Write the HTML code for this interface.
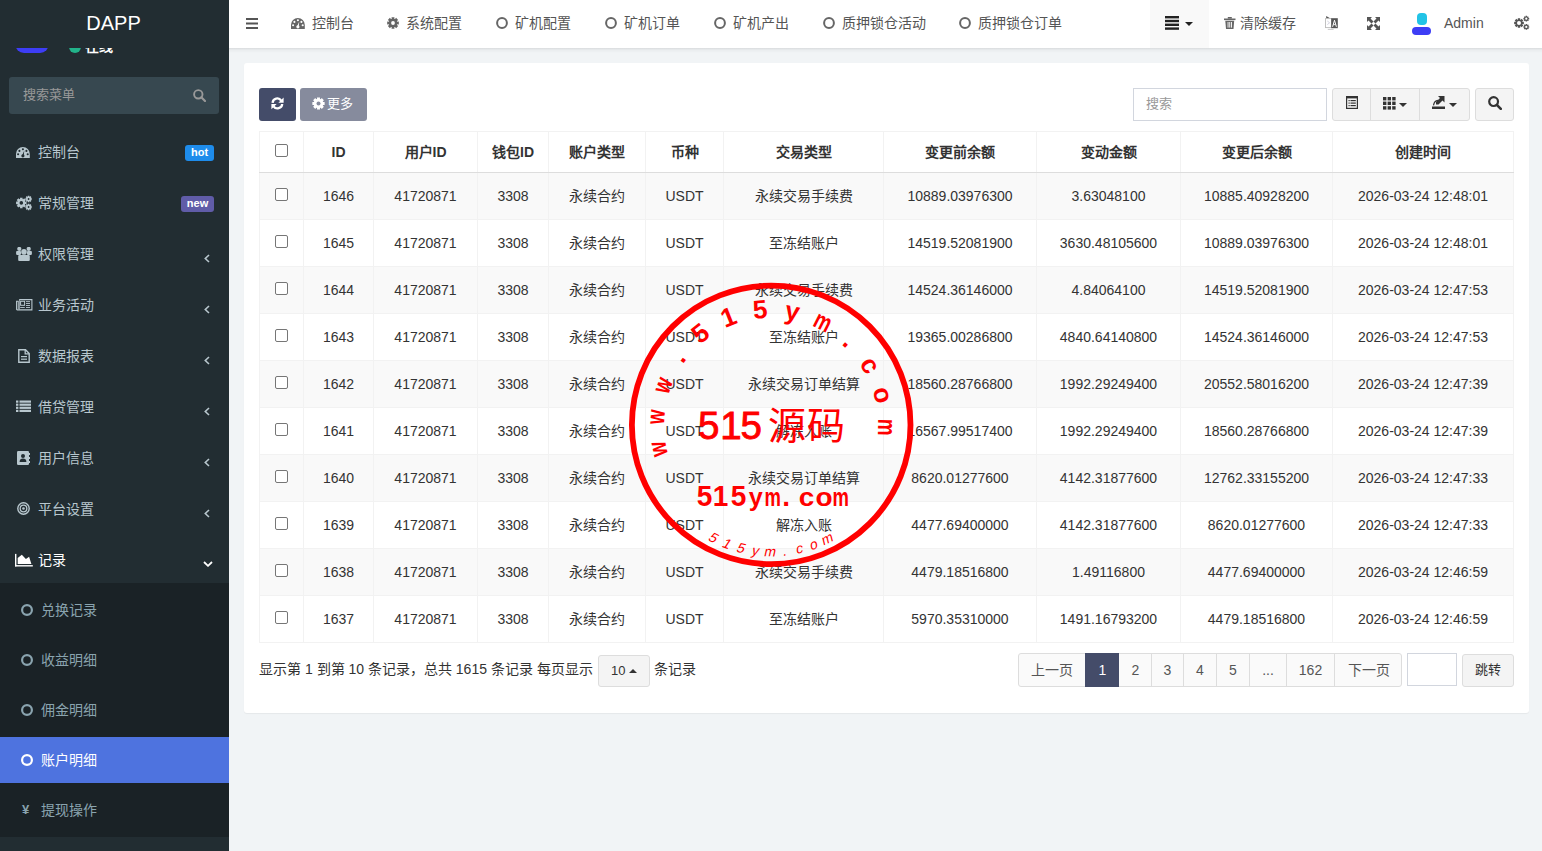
<!DOCTYPE html>
<html lang="zh-CN"><head><meta charset="utf-8">
<style>
*{box-sizing:border-box;margin:0;padding:0}
html,body{width:1542px;height:851px;overflow:hidden}
body{font-family:"Liberation Sans",sans-serif;font-size:14px;color:#333;background:#f1f4f6;position:relative}
.abs{position:absolute}
.t{position:absolute;white-space:nowrap;line-height:20px;height:20px}
.c{transform:translateX(-50%)}
.side{color:#b8c7ce}
.sub{color:#8aa4af}
.nav{color:#555}
.th{font-weight:bold;color:#333}
.bd{position:absolute;background:#f2f2f2}
</style></head><body>

<div class="abs" style="left:0;top:0;width:229px;height:851px;background:#222d32;overflow:hidden">
<div class="abs" style="left:15px;top:30px;width:34px;height:23px;border-radius:0 0 9px 9px;background:#3d3df5"></div>
<div class="abs" style="left:69px;top:41px;width:12px;height:12px;border-radius:50%;background:#22b38a"></div>
<div class="t" style="left:85px;top:36px;color:#fff;font-size:14px;font-weight:bold">在线</div>
<div class="abs" style="left:0;top:0;width:229px;height:48px;background:#222d32"></div>
<div class="t" style="left:-1px;width:229px;top:11px;height:24px;line-height:24px;text-align:center;color:#fff;font-size:20px">DAPP</div>
<div class="abs" style="left:9px;top:77px;width:210px;height:37px;border-radius:3px;background:#374850"></div>
<div class="t " style="left:23px;top:85px;color:#999;font-size:13px">搜索菜单</div>
<svg class="abs" style="left:193px;top:89px;" width="13" height="13" viewBox="0 0 13 13"><circle cx="5.3" cy="5.3" r="4.2" fill="none" stroke="#999" stroke-width="1.9"/><path d="M8.3 8.3 L12 12" stroke="#999" stroke-width="2.2" stroke-linecap="round"/></svg>
<div class="t " style="left:38px;top:142px;color:#b8c7ce;">控制台</div>
<div class="abs" style="left:185px;top:145px;width:29px;height:16px;border-radius:3px;background:#1e8ceb;color:#fff;font-size:11px;font-weight:bold;line-height:14px;text-align:center">hot</div>
<div class="t " style="left:38px;top:193px;color:#b8c7ce;">常规管理</div>
<div class="abs" style="left:181px;top:196px;width:33px;height:16px;border-radius:3px;background:#605ca8;color:#fff;font-size:11px;font-weight:bold;line-height:14px;text-align:center">new</div>
<div class="t " style="left:38px;top:244px;color:#b8c7ce;">权限管理</div>
<svg class="abs" style="left:204px;top:254px;" width="6" height="9" viewBox="0 0 6 9"><path d="M5 1 L1.3 4.5 L5 8" fill="none" stroke="#b8c7ce" stroke-width="1.6"/></svg>
<div class="t " style="left:38px;top:295px;color:#b8c7ce;">业务活动</div>
<svg class="abs" style="left:204px;top:305px;" width="6" height="9" viewBox="0 0 6 9"><path d="M5 1 L1.3 4.5 L5 8" fill="none" stroke="#b8c7ce" stroke-width="1.6"/></svg>
<div class="t " style="left:38px;top:346px;color:#b8c7ce;">数据报表</div>
<svg class="abs" style="left:204px;top:356px;" width="6" height="9" viewBox="0 0 6 9"><path d="M5 1 L1.3 4.5 L5 8" fill="none" stroke="#b8c7ce" stroke-width="1.6"/></svg>
<div class="t " style="left:38px;top:397px;color:#b8c7ce;">借贷管理</div>
<svg class="abs" style="left:204px;top:407px;" width="6" height="9" viewBox="0 0 6 9"><path d="M5 1 L1.3 4.5 L5 8" fill="none" stroke="#b8c7ce" stroke-width="1.6"/></svg>
<div class="t " style="left:38px;top:448px;color:#b8c7ce;">用户信息</div>
<svg class="abs" style="left:204px;top:458px;" width="6" height="9" viewBox="0 0 6 9"><path d="M5 1 L1.3 4.5 L5 8" fill="none" stroke="#b8c7ce" stroke-width="1.6"/></svg>
<div class="t " style="left:38px;top:499px;color:#b8c7ce;">平台设置</div>
<svg class="abs" style="left:204px;top:509px;" width="6" height="9" viewBox="0 0 6 9"><path d="M5 1 L1.3 4.5 L5 8" fill="none" stroke="#b8c7ce" stroke-width="1.6"/></svg>
<div class="t " style="left:38px;top:550px;color:#fff;">记录</div>
<svg class="abs" style="left:203px;top:561px;" width="10" height="6" viewBox="0 0 10 6"><path d="M1 1 L5 4.8 L9 1" fill="none" stroke="#fff" stroke-width="1.8"/></svg>
<svg class="abs" style="left:16px;top:147px;" width="15" height="11" viewBox="0 0 15 11"><path d="M0 11 L0 7 A6.9 6.9 0 0 1 13.8 7 L13.8 11 Z" fill="#b8c7ce"/><circle cx="6.9" cy="2.2" r="1.05" fill="#222d32"/><circle cx="3.4" cy="3.9" r="1.05" fill="#222d32"/><circle cx="10.4" cy="3.9" r="1.05" fill="#222d32"/><circle cx="2.1" cy="7.2" r="1.05" fill="#222d32"/><circle cx="11.7" cy="7.2" r="1.05" fill="#222d32"/><path d="M6.1 8.6 L8.3 3.6 L7.7 8.9 Z" fill="#222d32"/><circle cx="6.9" cy="8.8" r="1.6" fill="#222d32"/></svg>
<svg class="abs" style="left:15px;top:194px;" width="18" height="17" viewBox="0 0 18 17"><path d="M5.13 5.29 L4.99 3.66 L7.61 3.66 L7.47 5.29 L8.03 5.51 L9.08 4.27 L10.93 6.12 L9.69 7.17 L9.91 7.73 L11.54 7.59 L11.54 10.21 L9.91 10.07 L9.69 10.63 L10.93 11.68 L9.08 13.53 L8.03 12.29 L7.47 12.51 L7.61 14.14 L4.99 14.14 L5.13 12.51 L4.57 12.29 L3.52 13.53 L1.67 11.68 L2.91 10.63 L2.69 10.07 L1.06 10.21 L1.06 7.59 L2.69 7.73 L2.91 7.17 L1.67 6.12 L3.52 4.27 L4.57 5.51Z" fill="#b8c7ce"/><circle cx="6.3" cy="8.9" r="3.9" fill="#b8c7ce"/><circle cx="6.3" cy="8.9" r="1.8" fill="#222d32"/><path d="M12.89 2.81 L12.78 1.70 L14.42 1.70 L14.31 2.81 L14.64 2.95 L15.35 2.08 L16.52 3.25 L15.65 3.96 L15.79 4.29 L16.90 4.18 L16.90 5.82 L15.79 5.71 L15.65 6.04 L16.52 6.75 L15.35 7.92 L14.64 7.05 L14.31 7.19 L14.42 8.30 L12.78 8.30 L12.89 7.19 L12.56 7.05 L11.85 7.92 L10.68 6.75 L11.55 6.04 L11.41 5.71 L10.30 5.82 L10.30 4.18 L11.41 4.29 L11.55 3.96 L10.68 3.25 L11.85 2.08 L12.56 2.95Z" fill="#b8c7ce"/><circle cx="13.6" cy="5" r="2.4" fill="#b8c7ce"/><circle cx="13.6" cy="5" r="0.9" fill="#222d32"/><path d="M12.89 10.81 L12.78 9.70 L14.42 9.70 L14.31 10.81 L14.64 10.95 L15.35 10.08 L16.52 11.25 L15.65 11.96 L15.79 12.29 L16.90 12.18 L16.90 13.82 L15.79 13.71 L15.65 14.04 L16.52 14.75 L15.35 15.92 L14.64 15.05 L14.31 15.19 L14.42 16.30 L12.78 16.30 L12.89 15.19 L12.56 15.05 L11.85 15.92 L10.68 14.75 L11.55 14.04 L11.41 13.71 L10.30 13.82 L10.30 12.18 L11.41 12.29 L11.55 11.96 L10.68 11.25 L11.85 10.08 L12.56 10.95Z" fill="#b8c7ce"/><circle cx="13.6" cy="13" r="2.4" fill="#b8c7ce"/><circle cx="13.6" cy="13" r="0.9" fill="#222d32"/></svg>
<svg class="abs" style="left:16px;top:247px;" width="16" height="15" viewBox="0 0 16 15"><circle cx="3.3" cy="1.9" r="2.1" fill="#b8c7ce"/><circle cx="12.7" cy="1.9" r="2.1" fill="#b8c7ce"/><rect x="0.1" y="4.1" width="4.9" height="3.8" rx="0.8" fill="#b8c7ce"/><rect x="11" y="4.1" width="4.9" height="3.8" rx="0.8" fill="#b8c7ce"/><circle cx="8" cy="4.9" r="2.8" fill="#b8c7ce"/><rect x="2.2" y="7.9" width="11.6" height="6.2" rx="1.1" fill="#b8c7ce"/></svg>
<svg class="abs" style="left:16px;top:299px;" width="17" height="12" viewBox="0 0 17 12"><path d="M3.2 0.6 L15.9 0.6 L15.9 10.9 L1.3 10.9 Q0.6 10.9 0.6 10.2 L0.6 2.2 L2.2 2.2" fill="none" stroke="#b8c7ce" stroke-width="1.1"/><rect x="1.8" y="2" width="0.9" height="8" fill="#b8c7ce"/><rect x="2.9" y="0.6" width="0.8" height="10" fill="#b8c7ce"/><rect x="4.6" y="2.3" width="4" height="4" fill="none" stroke="#b8c7ce" stroke-width="1"/><rect x="10" y="2.2" width="4" height="0.9" fill="#b8c7ce"/><rect x="10" y="4.1" width="4" height="0.9" fill="#b8c7ce"/><rect x="10" y="6.1" width="4" height="0.9" fill="#b8c7ce"/><rect x="10" y="8.1" width="4" height="0.9" fill="#b8c7ce"/><rect x="4.2" y="8.1" width="4.6" height="0.9" fill="#b8c7ce"/></svg>
<svg class="abs" style="left:18px;top:349px;" width="12" height="14" viewBox="0 0 12 14"><path d="M0.8 0.8 L7.5 0.8 L11.2 4.5 L11.2 13.2 L0.8 13.2 Z" fill="none" stroke="#b8c7ce" stroke-width="1.4"/><path d="M7.2 1 L7.2 4.8 L11 4.8" fill="none" stroke="#b8c7ce" stroke-width="1.3"/><rect x="3" y="7" width="6" height="1.2" fill="#b8c7ce"/><rect x="3" y="9.6" width="6" height="1.2" fill="#b8c7ce"/></svg>
<svg class="abs" style="left:16px;top:400px;" width="15" height="12" viewBox="0 0 15 12"><rect x="0" y="0.5" width="2.4" height="2.2" fill="#b8c7ce"/><rect x="3.5" y="0.5" width="11.5" height="2.2" fill="#b8c7ce"/><rect x="0" y="3.6" width="2.4" height="2.2" fill="#b8c7ce"/><rect x="3.5" y="3.6" width="11.5" height="2.2" fill="#b8c7ce"/><rect x="0" y="6.7" width="2.4" height="2.2" fill="#b8c7ce"/><rect x="3.5" y="6.7" width="11.5" height="2.2" fill="#b8c7ce"/><rect x="0" y="9.8" width="2.4" height="2.2" fill="#b8c7ce"/><rect x="3.5" y="9.8" width="11.5" height="2.2" fill="#b8c7ce"/></svg>
<svg class="abs" style="left:17px;top:451px;" width="13" height="14" viewBox="0 0 13 14"><rect x="0" y="0" width="12" height="14" rx="1.2" fill="#b8c7ce"/><circle cx="6" cy="5" r="2" fill="#222d32"/><path d="M2.6 11 C2.6 8.5 4 7.6 6 7.6 C8 7.6 9.4 8.5 9.4 11 Z" fill="#222d32"/><rect x="12" y="2" width="1.2" height="2" fill="#b8c7ce"/><rect x="12" y="6" width="1.2" height="2" fill="#b8c7ce"/><rect x="12" y="10" width="1.2" height="2" fill="#b8c7ce"/></svg>
<svg class="abs" style="left:17px;top:502px;" width="13" height="13" viewBox="0 0 13 13"><circle cx="6.5" cy="6.5" r="5.7" fill="none" stroke="#b8c7ce" stroke-width="1.4"/><circle cx="6.5" cy="6.5" r="3.3" fill="none" stroke="#b8c7ce" stroke-width="1.3"/><circle cx="6.5" cy="6.5" r="1.3" fill="#b8c7ce"/></svg>
<svg class="abs" style="left:15px;top:553px;" width="18" height="14" viewBox="0 0 18 14"><rect x="0" y="0.9" width="1.4" height="12.5" fill="#fff"/><rect x="0" y="12.1" width="17.8" height="1.4" fill="#fff"/><path d="M2.7 11 L2.7 5 L6.8 1.8 L10.9 5.9 L14.1 3.8 L16.4 11 Z" fill="#fff"/></svg>
</div>
<div class="abs" style="left:0;top:583px;width:229px;height:254px;background:#1a2226"></div>
<div class="abs" style="left:0;top:737px;width:229px;height:46px;background:#4e73df"></div>
<div class="t " style="left:41px;top:600px;color:#8aa4af">兑换记录</div>
<svg class="abs" style="left:21px;top:604px;" width="12" height="12" viewBox="0 0 12 12"><circle cx="6" cy="6" r="4.9" fill="none" stroke="#8aa4af" stroke-width="2.2"/></svg>
<div class="t " style="left:41px;top:650px;color:#8aa4af">收益明细</div>
<svg class="abs" style="left:21px;top:654px;" width="12" height="12" viewBox="0 0 12 12"><circle cx="6" cy="6" r="4.9" fill="none" stroke="#8aa4af" stroke-width="2.2"/></svg>
<div class="t " style="left:41px;top:700px;color:#8aa4af">佣金明细</div>
<svg class="abs" style="left:21px;top:704px;" width="12" height="12" viewBox="0 0 12 12"><circle cx="6" cy="6" r="4.9" fill="none" stroke="#8aa4af" stroke-width="2.2"/></svg>
<div class="t " style="left:41px;top:750px;color:#fff">账户明细</div>
<svg class="abs" style="left:21px;top:754px;" width="12" height="12" viewBox="0 0 12 12"><circle cx="6" cy="6" r="4.9" fill="none" stroke="#fff" stroke-width="2.2"/></svg>
<div class="t " style="left:41px;top:800px;color:#8aa4af">提现操作</div>
<div class="t " style="left:22px;top:800px;color:#8aa4af;font-size:13px;font-weight:bold">¥</div>
<div class="abs" style="left:229px;top:0;width:1313px;height:48px;background:#fff"></div>
<div class="abs" style="left:229px;top:48px;width:1313px;height:5px;background:linear-gradient(rgba(0,0,0,.10),rgba(0,0,0,.03) 40%,rgba(0,0,0,0))"></div>
<svg class="abs" style="left:246px;top:18px;" width="12" height="11" viewBox="0 0 12 11"><rect x="0" y="0" width="12" height="2" fill="#555"/><rect x="0" y="4.5" width="12" height="2" fill="#555"/><rect x="0" y="9" width="12" height="2" fill="#555"/></svg>
<svg class="abs" style="left:291px;top:18px;" width="14" height="11" viewBox="0 0 14 11"><path d="M0 11 L0 7 A6.9 6.9 0 0 1 13.8 7 L13.8 11 Z" fill="#666"/><circle cx="6.9" cy="2.2" r="1.05" fill="#fff"/><circle cx="3.4" cy="3.9" r="1.05" fill="#fff"/><circle cx="10.4" cy="3.9" r="1.05" fill="#fff"/><circle cx="2.1" cy="7.2" r="1.05" fill="#fff"/><circle cx="11.7" cy="7.2" r="1.05" fill="#fff"/><path d="M6.1 8.6 L8.3 3.6 L7.7 8.9 Z" fill="#fff"/><circle cx="6.9" cy="8.8" r="1.6" fill="#fff"/></svg>
<div class="t nav" style="left:312px;top:13px;">控制台</div>
<svg class="abs" style="left:387px;top:17px;" width="12" height="12" viewBox="0 0 12 12"><path d="M4.73 2.10 L4.54 0.18 L7.46 0.18 L7.27 2.10 L7.86 2.35 L9.09 0.85 L11.15 2.91 L9.65 4.14 L9.90 4.73 L11.82 4.54 L11.82 7.46 L9.90 7.27 L9.65 7.86 L11.15 9.09 L9.09 11.15 L7.86 9.65 L7.27 9.90 L7.46 11.82 L4.54 11.82 L4.73 9.90 L4.14 9.65 L2.91 11.15 L0.85 9.09 L2.35 7.86 L2.10 7.27 L0.18 7.46 L0.18 4.54 L2.10 4.73 L2.35 4.14 L0.85 2.91 L2.91 0.85 L4.14 2.35Z" fill="#666"/><circle cx="6" cy="6" r="4.199999999999999" fill="#666"/><circle cx="6" cy="6" r="1.9" fill="#fff"/></svg>
<div class="t nav" style="left:406px;top:13px;">系统配置</div>
<svg class="abs" style="left:496px;top:17px;" width="12" height="12" viewBox="0 0 12 12"><circle cx="6" cy="6" r="4.9" fill="none" stroke="#666" stroke-width="2"/></svg>
<div class="t nav" style="left:515px;top:13px;">矿机配置</div>
<svg class="abs" style="left:605px;top:17px;" width="12" height="12" viewBox="0 0 12 12"><circle cx="6" cy="6" r="4.9" fill="none" stroke="#666" stroke-width="2"/></svg>
<div class="t nav" style="left:624px;top:13px;">矿机订单</div>
<svg class="abs" style="left:714px;top:17px;" width="12" height="12" viewBox="0 0 12 12"><circle cx="6" cy="6" r="4.9" fill="none" stroke="#666" stroke-width="2"/></svg>
<div class="t nav" style="left:733px;top:13px;">矿机产出</div>
<svg class="abs" style="left:823px;top:17px;" width="12" height="12" viewBox="0 0 12 12"><circle cx="6" cy="6" r="4.9" fill="none" stroke="#666" stroke-width="2"/></svg>
<div class="t nav" style="left:842px;top:13px;">质押锁仓活动</div>
<svg class="abs" style="left:959px;top:17px;" width="12" height="12" viewBox="0 0 12 12"><circle cx="6" cy="6" r="4.9" fill="none" stroke="#666" stroke-width="2"/></svg>
<div class="t nav" style="left:978px;top:13px;">质押锁仓订单</div>
<div class="abs" style="left:1150px;top:0;width:59px;height:48px;background:#f9f9f9"></div>
<svg class="abs" style="left:1165px;top:16px;" width="15" height="14" viewBox="0 0 15 14"><rect x="0" y="0" width="14" height="2.4" fill="#222"/><rect x="0" y="3.8" width="14" height="2.4" fill="#222"/><rect x="0" y="7.6" width="14" height="2.4" fill="#222"/><rect x="0" y="11.4" width="14" height="2.4" fill="#222"/></svg>
<svg class="abs" style="left:1185px;top:22px;" width="8" height="4" viewBox="0 0 8 4"><path d="M0 0 L8 0 L4 4 Z" fill="#222"/></svg>
<svg class="abs" style="left:1224px;top:17px;" width="12" height="12" viewBox="0 0 12 12"><rect x="0" y="1.5" width="11.5" height="1.6" fill="#666"/><rect x="3.8" y="0" width="4" height="1.6" fill="#666"/><path d="M1.3 3.8 L10.2 3.8 L9.5 12 L2 12 Z" fill="#666"/><rect x="3.6" y="5" width="0.9" height="5.6" fill="#fff"/><rect x="5.3" y="5" width="0.9" height="5.6" fill="#fff"/><rect x="7" y="5" width="0.9" height="5.6" fill="#fff"/></svg>
<div class="t nav" style="left:1240px;top:13px;">清除缓存</div>
<svg class="abs" style="left:1325px;top:16px;" width="13" height="14" viewBox="0 0 13 14"><path d="M1.2 0 L1.2 2.6 L5.5 2.6 Z" fill="#555"/><rect x="0.5" y="2.6" width="6.2" height="9" fill="#fff" stroke="#bbb" stroke-width="0.9"/><path d="M2.3 5 L4.6 6.8 L2.3 8.6" fill="none" stroke="#c8c8d8" stroke-width="0.8"/><rect x="6.2" y="2.2" width="6.6" height="10" fill="#555"/><path d="M7.6 10.8 L9.5 4.2 L11.4 10.8" fill="none" stroke="#fff" stroke-width="1"/><path d="M8.3 8.6 L10.7 8.6" stroke="#fff" stroke-width="0.8"/><path d="M2.8 13.4 L8.6 13.4" stroke="#bbb" stroke-width="0.8"/></svg>
<svg class="abs" style="left:1367px;top:17px;" width="13" height="13" viewBox="0 0 13 13"><path d="M0 0 L5 0 L3.5 1.5 L6.5 4.5 L4.5 6.5 L1.5 3.5 L0 5 Z" fill="#555"/><path d="M13 0 L8 0 L9.5 1.5 L6.5 4.5 L8.5 6.5 L11.5 3.5 L13 5 Z" fill="#555"/><path d="M0 13 L5 13 L3.5 11.5 L6.5 8.5 L4.5 6.5 L1.5 9.5 L0 8 Z" fill="#555"/><path d="M13 13 L8 13 L9.5 11.5 L6.5 8.5 L8.5 6.5 L11.5 9.5 L13 8 Z" fill="#555"/></svg>
<div class="abs" style="left:1417px;top:13px;width:10px;height:12px;border-radius:4px;background:#22c3e6"></div>
<div class="abs" style="left:1412px;top:27px;width:19px;height:8px;border-radius:4px;background:#3d3df5"></div>
<div class="t nav" style="left:1444px;top:13px;">Admin</div>
<svg class="abs" style="left:1513px;top:14px;" width="17" height="17" viewBox="0 0 17 17"><path d="M4.92 5.67 L4.79 4.15 L7.21 4.15 L7.08 5.67 L7.59 5.88 L8.57 4.71 L10.29 6.43 L9.12 7.41 L9.33 7.92 L10.85 7.79 L10.85 10.21 L9.33 10.08 L9.12 10.59 L10.29 11.57 L8.57 13.29 L7.59 12.12 L7.08 12.33 L7.21 13.85 L4.79 13.85 L4.92 12.33 L4.41 12.12 L3.43 13.29 L1.71 11.57 L2.88 10.59 L2.67 10.08 L1.15 10.21 L1.15 7.79 L2.67 7.92 L2.88 7.41 L1.71 6.43 L3.43 4.71 L4.41 5.88Z" fill="#555"/><circle cx="6" cy="9" r="3.6" fill="#555"/><circle cx="6" cy="9" r="2.0" fill="#fff"/><path d="M12.68 2.80 L12.57 1.79 L14.03 1.79 L13.92 2.80 L14.21 2.92 L14.84 2.13 L15.87 3.16 L15.08 3.79 L15.20 4.08 L16.21 3.97 L16.21 5.43 L15.20 5.32 L15.08 5.61 L15.87 6.24 L14.84 7.27 L14.21 6.48 L13.92 6.60 L14.03 7.61 L12.57 7.61 L12.68 6.60 L12.39 6.48 L11.76 7.27 L10.73 6.24 L11.52 5.61 L11.40 5.32 L10.39 5.43 L10.39 3.97 L11.40 4.08 L11.52 3.79 L10.73 3.16 L11.76 2.13 L12.39 2.92Z" fill="#555"/><circle cx="13.3" cy="4.7" r="2.1" fill="#555"/><circle cx="13.3" cy="4.7" r="1.1" fill="#fff"/><path d="M12.68 11.00 L12.57 9.99 L14.03 9.99 L13.92 11.00 L14.21 11.12 L14.84 10.33 L15.87 11.36 L15.08 11.99 L15.20 12.28 L16.21 12.17 L16.21 13.63 L15.20 13.52 L15.08 13.81 L15.87 14.44 L14.84 15.47 L14.21 14.68 L13.92 14.80 L14.03 15.81 L12.57 15.81 L12.68 14.80 L12.39 14.68 L11.76 15.47 L10.73 14.44 L11.52 13.81 L11.40 13.52 L10.39 13.63 L10.39 12.17 L11.40 12.28 L11.52 11.99 L10.73 11.36 L11.76 10.33 L12.39 11.12Z" fill="#555"/><circle cx="13.3" cy="12.9" r="2.1" fill="#555"/><circle cx="13.3" cy="12.9" r="1.1" fill="#fff"/></svg>
<div class="abs" style="left:244px;top:63px;width:1285px;height:650px;background:#fff;border-radius:3px;box-shadow:0 1px 1px rgba(0,0,0,.05)"></div>
<div class="abs" style="left:259px;top:88px;width:37px;height:33px;border-radius:3px;background:#444c69"></div>
<svg class="abs" style="left:271px;top:97px;" width="13" height="13" viewBox="0 0 13 13"><path d="M1.6 5.8 A4.7 4.7 0 0 1 10.2 3.6" fill="none" stroke="#fff" stroke-width="2.3"/><path d="M12.6 0.6 L12.6 5.8 L7.4 5.8 Z" fill="#fff"/><path d="M11.2 7 A4.7 4.7 0 0 1 2.6 9.3" fill="none" stroke="#fff" stroke-width="2.3"/><path d="M0.4 12.3 L0.4 7 L5.6 7 Z" fill="#fff"/></svg>
<div class="abs" style="left:300px;top:88px;width:67px;height:33px;border-radius:3px;background:#868b9d"></div>
<svg class="abs" style="left:312px;top:97px;" width="13" height="13" viewBox="0 0 13 13"><path d="M5.08 2.13 L4.97 0.39 L8.03 0.39 L7.92 2.13 L8.59 2.40 L9.74 1.10 L11.90 3.26 L10.60 4.41 L10.87 5.08 L12.61 4.97 L12.61 8.03 L10.87 7.92 L10.60 8.59 L11.90 9.74 L9.74 11.90 L8.59 10.60 L7.92 10.87 L8.03 12.61 L4.97 12.61 L5.08 10.87 L4.41 10.60 L3.26 11.90 L1.10 9.74 L2.40 8.59 L2.13 7.92 L0.39 8.03 L0.39 4.97 L2.13 5.08 L2.40 4.41 L1.10 3.26 L3.26 1.10 L4.41 2.40Z" fill="#fff"/><circle cx="6.5" cy="6.5" r="4.699999999999999" fill="#fff"/><circle cx="6.5" cy="6.5" r="2.0" fill="#868b9d"/></svg>
<div class="t " style="left:327px;top:94px;color:#fff;font-size:13px">更多</div>
<div class="abs" style="left:1133px;top:88px;width:194px;height:33px;border:1px solid #d2d6de;background:#fff"></div>
<div class="t " style="left:1146px;top:94px;color:#999;font-size:13px">搜索</div>
<div class="abs" style="left:1332px;top:88px;width:138px;height:33px;border:1px solid #ddd;border-radius:3px;background:#f4f4f4"></div>
<div class="abs" style="left:1370px;top:89px;width:1px;height:31px;background:#ddd"></div>
<div class="abs" style="left:1419px;top:89px;width:1px;height:31px;background:#ddd"></div>
<div class="abs" style="left:1475px;top:88px;width:39px;height:33px;border:1px solid #ddd;border-radius:3px;background:#f4f4f4"></div>
<svg class="abs" style="left:1346px;top:96px;" width="12" height="13" viewBox="0 0 12 13"><rect x="0.6" y="0.6" width="10.8" height="11.8" fill="none" stroke="#333" stroke-width="1.2"/><rect x="0.6" y="0.6" width="10.8" height="1.8" fill="#333"/><rect x="2.5" y="4" width="1.2" height="1.2" fill="#333"/><rect x="4.5" y="4" width="5.3" height="1.2" fill="#333"/><rect x="2.5" y="6.5" width="1.2" height="1.2" fill="#333"/><rect x="4.5" y="6.5" width="5.3" height="1.2" fill="#333"/><rect x="2.5" y="9" width="1.2" height="1.2" fill="#333"/><rect x="4.5" y="9" width="5.3" height="1.2" fill="#333"/></svg>
<svg class="abs" style="left:1383px;top:97px;" width="13" height="13" viewBox="0 0 13 13"><rect x="0" y="0" width="3.4" height="3.4" fill="#333"/><rect x="0" y="4.6" width="3.4" height="3.4" fill="#333"/><rect x="0" y="9.2" width="3.4" height="3.4" fill="#333"/><rect x="4.6" y="0" width="3.4" height="3.4" fill="#333"/><rect x="4.6" y="4.6" width="3.4" height="3.4" fill="#333"/><rect x="4.6" y="9.2" width="3.4" height="3.4" fill="#333"/><rect x="9.2" y="0" width="3.4" height="3.4" fill="#333"/><rect x="9.2" y="4.6" width="3.4" height="3.4" fill="#333"/><rect x="9.2" y="9.2" width="3.4" height="3.4" fill="#333"/></svg>
<svg class="abs" style="left:1399px;top:103px;" width="8" height="4" viewBox="0 0 8 4"><path d="M0 0 L8 0 L4 4 Z" fill="#333"/></svg>
<svg class="abs" style="left:1432px;top:96px;" width="13" height="13" viewBox="0 0 13 13"><rect x="0" y="10.5" width="13" height="2.5" fill="#333"/><path d="M6 0 L12.5 0 L12.5 6.5 L10.5 4.5 L6.5 8.5 L4 8.5 L4 6 L8 2 Z" fill="#333"/><path d="M1.5 9.3 C2 6 4 4.5 6 4.3" fill="none" stroke="#333" stroke-width="1.2"/></svg>
<svg class="abs" style="left:1449px;top:103px;" width="8" height="4" viewBox="0 0 8 4"><path d="M0 0 L8 0 L4 4 Z" fill="#333"/></svg>
<svg class="abs" style="left:1488px;top:96px;" width="14" height="14" viewBox="0 0 14 14"><circle cx="5.6" cy="5.6" r="4.4" fill="none" stroke="#333" stroke-width="2.2"/><path d="M8.8 8.8 L12.8 12.8" stroke="#333" stroke-width="2.6" stroke-linecap="round"/></svg>
<div class="abs" style="left:259px;top:172px;width:1254px;height:47px;background:#f9f9f9"></div>
<div class="abs" style="left:259px;top:266px;width:1254px;height:47px;background:#f9f9f9"></div>
<div class="abs" style="left:259px;top:360px;width:1254px;height:47px;background:#f9f9f9"></div>
<div class="abs" style="left:259px;top:454px;width:1254px;height:47px;background:#f9f9f9"></div>
<div class="abs" style="left:259px;top:548px;width:1254px;height:47px;background:#f9f9f9"></div>
<div class="bd" style="left:259px;top:131px;width:1px;height:512px"></div>
<div class="bd" style="left:303px;top:131px;width:1px;height:512px"></div>
<div class="bd" style="left:373px;top:131px;width:1px;height:512px"></div>
<div class="bd" style="left:477px;top:131px;width:1px;height:512px"></div>
<div class="bd" style="left:548px;top:131px;width:1px;height:512px"></div>
<div class="bd" style="left:645px;top:131px;width:1px;height:512px"></div>
<div class="bd" style="left:723px;top:131px;width:1px;height:512px"></div>
<div class="bd" style="left:883px;top:131px;width:1px;height:512px"></div>
<div class="bd" style="left:1036px;top:131px;width:1px;height:512px"></div>
<div class="bd" style="left:1180px;top:131px;width:1px;height:512px"></div>
<div class="bd" style="left:1332px;top:131px;width:1px;height:512px"></div>
<div class="bd" style="left:1513px;top:131px;width:1px;height:512px"></div>
<div class="bd" style="left:259px;top:131px;width:1255px;height:1px;background:#f2f2f2"></div>
<div class="bd" style="left:259px;top:172px;width:1255px;height:1px;background:#ddd"></div>
<div class="bd" style="left:259px;top:219px;width:1255px;height:1px;background:#f2f2f2"></div>
<div class="bd" style="left:259px;top:266px;width:1255px;height:1px;background:#f2f2f2"></div>
<div class="bd" style="left:259px;top:313px;width:1255px;height:1px;background:#f2f2f2"></div>
<div class="bd" style="left:259px;top:360px;width:1255px;height:1px;background:#f2f2f2"></div>
<div class="bd" style="left:259px;top:407px;width:1255px;height:1px;background:#f2f2f2"></div>
<div class="bd" style="left:259px;top:454px;width:1255px;height:1px;background:#f2f2f2"></div>
<div class="bd" style="left:259px;top:501px;width:1255px;height:1px;background:#f2f2f2"></div>
<div class="bd" style="left:259px;top:548px;width:1255px;height:1px;background:#f2f2f2"></div>
<div class="bd" style="left:259px;top:595px;width:1255px;height:1px;background:#f2f2f2"></div>
<div class="bd" style="left:259px;top:642px;width:1255px;height:1px;background:#f2f2f2"></div>
<div class="abs" style="left:275px;top:144px;width:13px;height:13px;border:1px solid #767676;border-radius:2px;background:#fff"></div>
<div class="t c th" style="left:338.5px;top:141.5px;">ID</div>
<div class="t c th" style="left:425.5px;top:141.5px;">用户ID</div>
<div class="t c th" style="left:513.0px;top:141.5px;">钱包ID</div>
<div class="t c th" style="left:597.0px;top:141.5px;">账户类型</div>
<div class="t c th" style="left:684.5px;top:141.5px;">币种</div>
<div class="t c th" style="left:803.5px;top:141.5px;">交易类型</div>
<div class="t c th" style="left:960.0px;top:141.5px;">变更前余额</div>
<div class="t c th" style="left:1108.5px;top:141.5px;">变动金额</div>
<div class="t c th" style="left:1256.5px;top:141.5px;">变更后余额</div>
<div class="t c th" style="left:1423.0px;top:141.5px;">创建时间</div>
<div class="abs" style="left:275px;top:188px;width:13px;height:13px;border:1px solid #767676;border-radius:2px;background:#fff"></div>
<div class="t c" style="left:338.5px;top:186.0px;">1646</div>
<div class="t c" style="left:425.5px;top:186.0px;">41720871</div>
<div class="t c" style="left:513.0px;top:186.0px;">3308</div>
<div class="t c" style="left:597.0px;top:186.0px;">永续合约</div>
<div class="t c" style="left:684.5px;top:186.0px;">USDT</div>
<div class="t c" style="left:803.5px;top:186.0px;">永续交易手续费</div>
<div class="t c" style="left:960.0px;top:186.0px;">10889.03976300</div>
<div class="t c" style="left:1108.5px;top:186.0px;">3.63048100</div>
<div class="t c" style="left:1256.5px;top:186.0px;">10885.40928200</div>
<div class="t c" style="left:1423.0px;top:186.0px;">2026-03-24 12:48:01</div>
<div class="abs" style="left:275px;top:235px;width:13px;height:13px;border:1px solid #767676;border-radius:2px;background:#fff"></div>
<div class="t c" style="left:338.5px;top:233.0px;">1645</div>
<div class="t c" style="left:425.5px;top:233.0px;">41720871</div>
<div class="t c" style="left:513.0px;top:233.0px;">3308</div>
<div class="t c" style="left:597.0px;top:233.0px;">永续合约</div>
<div class="t c" style="left:684.5px;top:233.0px;">USDT</div>
<div class="t c" style="left:803.5px;top:233.0px;">至冻结账户</div>
<div class="t c" style="left:960.0px;top:233.0px;">14519.52081900</div>
<div class="t c" style="left:1108.5px;top:233.0px;">3630.48105600</div>
<div class="t c" style="left:1256.5px;top:233.0px;">10889.03976300</div>
<div class="t c" style="left:1423.0px;top:233.0px;">2026-03-24 12:48:01</div>
<div class="abs" style="left:275px;top:282px;width:13px;height:13px;border:1px solid #767676;border-radius:2px;background:#fff"></div>
<div class="t c" style="left:338.5px;top:280.0px;">1644</div>
<div class="t c" style="left:425.5px;top:280.0px;">41720871</div>
<div class="t c" style="left:513.0px;top:280.0px;">3308</div>
<div class="t c" style="left:597.0px;top:280.0px;">永续合约</div>
<div class="t c" style="left:684.5px;top:280.0px;">USDT</div>
<div class="t c" style="left:803.5px;top:280.0px;">永续交易手续费</div>
<div class="t c" style="left:960.0px;top:280.0px;">14524.36146000</div>
<div class="t c" style="left:1108.5px;top:280.0px;">4.84064100</div>
<div class="t c" style="left:1256.5px;top:280.0px;">14519.52081900</div>
<div class="t c" style="left:1423.0px;top:280.0px;">2026-03-24 12:47:53</div>
<div class="abs" style="left:275px;top:329px;width:13px;height:13px;border:1px solid #767676;border-radius:2px;background:#fff"></div>
<div class="t c" style="left:338.5px;top:327.0px;">1643</div>
<div class="t c" style="left:425.5px;top:327.0px;">41720871</div>
<div class="t c" style="left:513.0px;top:327.0px;">3308</div>
<div class="t c" style="left:597.0px;top:327.0px;">永续合约</div>
<div class="t c" style="left:684.5px;top:327.0px;">USDT</div>
<div class="t c" style="left:803.5px;top:327.0px;">至冻结账户</div>
<div class="t c" style="left:960.0px;top:327.0px;">19365.00286800</div>
<div class="t c" style="left:1108.5px;top:327.0px;">4840.64140800</div>
<div class="t c" style="left:1256.5px;top:327.0px;">14524.36146000</div>
<div class="t c" style="left:1423.0px;top:327.0px;">2026-03-24 12:47:53</div>
<div class="abs" style="left:275px;top:376px;width:13px;height:13px;border:1px solid #767676;border-radius:2px;background:#fff"></div>
<div class="t c" style="left:338.5px;top:374.0px;">1642</div>
<div class="t c" style="left:425.5px;top:374.0px;">41720871</div>
<div class="t c" style="left:513.0px;top:374.0px;">3308</div>
<div class="t c" style="left:597.0px;top:374.0px;">永续合约</div>
<div class="t c" style="left:684.5px;top:374.0px;">USDT</div>
<div class="t c" style="left:803.5px;top:374.0px;">永续交易订单结算</div>
<div class="t c" style="left:960.0px;top:374.0px;">18560.28766800</div>
<div class="t c" style="left:1108.5px;top:374.0px;">1992.29249400</div>
<div class="t c" style="left:1256.5px;top:374.0px;">20552.58016200</div>
<div class="t c" style="left:1423.0px;top:374.0px;">2026-03-24 12:47:39</div>
<div class="abs" style="left:275px;top:423px;width:13px;height:13px;border:1px solid #767676;border-radius:2px;background:#fff"></div>
<div class="t c" style="left:338.5px;top:421.0px;">1641</div>
<div class="t c" style="left:425.5px;top:421.0px;">41720871</div>
<div class="t c" style="left:513.0px;top:421.0px;">3308</div>
<div class="t c" style="left:597.0px;top:421.0px;">永续合约</div>
<div class="t c" style="left:684.5px;top:421.0px;">USDT</div>
<div class="t c" style="left:803.5px;top:421.0px;">解冻入账</div>
<div class="t c" style="left:960.0px;top:421.0px;">16567.99517400</div>
<div class="t c" style="left:1108.5px;top:421.0px;">1992.29249400</div>
<div class="t c" style="left:1256.5px;top:421.0px;">18560.28766800</div>
<div class="t c" style="left:1423.0px;top:421.0px;">2026-03-24 12:47:39</div>
<div class="abs" style="left:275px;top:470px;width:13px;height:13px;border:1px solid #767676;border-radius:2px;background:#fff"></div>
<div class="t c" style="left:338.5px;top:468.0px;">1640</div>
<div class="t c" style="left:425.5px;top:468.0px;">41720871</div>
<div class="t c" style="left:513.0px;top:468.0px;">3308</div>
<div class="t c" style="left:597.0px;top:468.0px;">永续合约</div>
<div class="t c" style="left:684.5px;top:468.0px;">USDT</div>
<div class="t c" style="left:803.5px;top:468.0px;">永续交易订单结算</div>
<div class="t c" style="left:960.0px;top:468.0px;">8620.01277600</div>
<div class="t c" style="left:1108.5px;top:468.0px;">4142.31877600</div>
<div class="t c" style="left:1256.5px;top:468.0px;">12762.33155200</div>
<div class="t c" style="left:1423.0px;top:468.0px;">2026-03-24 12:47:33</div>
<div class="abs" style="left:275px;top:517px;width:13px;height:13px;border:1px solid #767676;border-radius:2px;background:#fff"></div>
<div class="t c" style="left:338.5px;top:515.0px;">1639</div>
<div class="t c" style="left:425.5px;top:515.0px;">41720871</div>
<div class="t c" style="left:513.0px;top:515.0px;">3308</div>
<div class="t c" style="left:597.0px;top:515.0px;">永续合约</div>
<div class="t c" style="left:684.5px;top:515.0px;">USDT</div>
<div class="t c" style="left:803.5px;top:515.0px;">解冻入账</div>
<div class="t c" style="left:960.0px;top:515.0px;">4477.69400000</div>
<div class="t c" style="left:1108.5px;top:515.0px;">4142.31877600</div>
<div class="t c" style="left:1256.5px;top:515.0px;">8620.01277600</div>
<div class="t c" style="left:1423.0px;top:515.0px;">2026-03-24 12:47:33</div>
<div class="abs" style="left:275px;top:564px;width:13px;height:13px;border:1px solid #767676;border-radius:2px;background:#fff"></div>
<div class="t c" style="left:338.5px;top:562.0px;">1638</div>
<div class="t c" style="left:425.5px;top:562.0px;">41720871</div>
<div class="t c" style="left:513.0px;top:562.0px;">3308</div>
<div class="t c" style="left:597.0px;top:562.0px;">永续合约</div>
<div class="t c" style="left:684.5px;top:562.0px;">USDT</div>
<div class="t c" style="left:803.5px;top:562.0px;">永续交易手续费</div>
<div class="t c" style="left:960.0px;top:562.0px;">4479.18516800</div>
<div class="t c" style="left:1108.5px;top:562.0px;">1.49116800</div>
<div class="t c" style="left:1256.5px;top:562.0px;">4477.69400000</div>
<div class="t c" style="left:1423.0px;top:562.0px;">2026-03-24 12:46:59</div>
<div class="abs" style="left:275px;top:611px;width:13px;height:13px;border:1px solid #767676;border-radius:2px;background:#fff"></div>
<div class="t c" style="left:338.5px;top:609.0px;">1637</div>
<div class="t c" style="left:425.5px;top:609.0px;">41720871</div>
<div class="t c" style="left:513.0px;top:609.0px;">3308</div>
<div class="t c" style="left:597.0px;top:609.0px;">永续合约</div>
<div class="t c" style="left:684.5px;top:609.0px;">USDT</div>
<div class="t c" style="left:803.5px;top:609.0px;">至冻结账户</div>
<div class="t c" style="left:960.0px;top:609.0px;">5970.35310000</div>
<div class="t c" style="left:1108.5px;top:609.0px;">1491.16793200</div>
<div class="t c" style="left:1256.5px;top:609.0px;">4479.18516800</div>
<div class="t c" style="left:1423.0px;top:609.0px;">2026-03-24 12:46:59</div>
<div class="t " style="left:259px;top:659px;">显示第 1 到第 10 条记录，总共 1615 条记录 每页显示</div>
<div class="abs" style="left:598px;top:655px;width:52px;height:32px;border:1px solid #ddd;border-radius:3px;background:#f4f4f4"></div>
<div class="t " style="left:611px;top:661px;font-size:13px">10</div>
<svg class="abs" style="left:629px;top:669px;" width="8" height="4" viewBox="0 0 8 4"><path d="M0 4 L8 4 L4 0 Z" fill="#333"/></svg>
<div class="t " style="left:654px;top:659px;">条记录</div>
<div class="abs" style="left:1018px;top:653px;width:384px;height:34px;border:1px solid #ddd;border-radius:3px;background:#fafafa"></div>
<div class="t c" style="left:1052.0px;top:660px;color:#555">上一页</div>
<div class="abs" style="left:1085px;top:653px;width:34px;height:34px;background:#444c69"></div>
<div class="t c" style="left:1102.5px;top:660px;color:#fff">1</div>
<div class="t c" style="left:1135.5px;top:660px;color:#555">2</div>
<div class="bd" style="left:1151px;top:653px;width:1px;height:34px;background:#ddd"></div>
<div class="t c" style="left:1167.5px;top:660px;color:#555">3</div>
<div class="bd" style="left:1183px;top:653px;width:1px;height:34px;background:#ddd"></div>
<div class="t c" style="left:1200.0px;top:660px;color:#555">4</div>
<div class="bd" style="left:1216px;top:653px;width:1px;height:34px;background:#ddd"></div>
<div class="t c" style="left:1233.0px;top:660px;color:#555">5</div>
<div class="bd" style="left:1249px;top:653px;width:1px;height:34px;background:#ddd"></div>
<div class="t c" style="left:1268.0px;top:660px;color:#555">...</div>
<div class="bd" style="left:1286px;top:653px;width:1px;height:34px;background:#ddd"></div>
<div class="t c" style="left:1310.5px;top:660px;color:#555">162</div>
<div class="bd" style="left:1334px;top:653px;width:1px;height:34px;background:#ddd"></div>
<div class="t c" style="left:1368.5px;top:660px;color:#555">下一页</div>
<div class="abs" style="left:1407px;top:653px;width:50px;height:33px;border:1px solid #d2d6de;background:#fff"></div>
<div class="abs" style="left:1462px;top:654px;width:52px;height:33px;border:1px solid #ddd;border-radius:3px;background:#f4f4f4"></div>
<div class="t c" style="left:1488px;top:660px;font-size:13px">跳转</div>
<svg class="abs" style="left:0;top:0" width="1542" height="851" viewBox="0 0 1542 851"><circle cx="771.2" cy="424.9" r="139.3" fill="none" stroke="#f00" stroke-width="5.8"/><text x="0" y="0" transform="translate(666.58,447.33) rotate(257.90) scale(0.72,1)" text-anchor="middle" font-family="Liberation Sans" font-weight="bold" font-size="26" fill="#f00">w</text><text x="0" y="0" transform="translate(664.46,417.44) rotate(274.00) scale(0.72,1)" text-anchor="middle" font-family="Liberation Sans" font-weight="bold" font-size="26" fill="#f00">w</text><text x="0" y="0" transform="translate(670.72,388.13) rotate(290.10) scale(0.72,1)" text-anchor="middle" font-family="Liberation Sans" font-weight="bold" font-size="26" fill="#f00">w</text><text x="0" y="0" transform="translate(684.86,361.71) rotate(306.20)" text-anchor="middle" font-family="Liberation Sans" font-weight="bold" font-size="26" fill="#f00">.</text><text x="0" y="0" transform="translate(705.77,340.24) rotate(322.30)" text-anchor="middle" font-family="Liberation Sans" font-weight="bold" font-size="26" fill="#f00">5</text><text x="0" y="0" transform="translate(731.81,325.41) rotate(338.40)" text-anchor="middle" font-family="Liberation Sans" font-weight="bold" font-size="26" fill="#f00">1</text><text x="0" y="0" transform="translate(760.94,318.39) rotate(354.50)" text-anchor="middle" font-family="Liberation Sans" font-weight="bold" font-size="26" fill="#f00">5</text><text x="0" y="0" transform="translate(790.88,319.73) rotate(370.60)" text-anchor="middle" font-family="Liberation Sans" font-weight="bold" font-size="26" fill="#f00">y</text><text x="0" y="0" transform="translate(819.28,329.31) rotate(386.70) scale(0.72,1)" text-anchor="middle" font-family="Liberation Sans" font-weight="bold" font-size="26" fill="#f00">m</text><text x="0" y="0" transform="translate(843.90,346.39) rotate(402.80)" text-anchor="middle" font-family="Liberation Sans" font-weight="bold" font-size="26" fill="#f00">.</text><text x="0" y="0" transform="translate(862.82,369.63) rotate(418.90)" text-anchor="middle" font-family="Liberation Sans" font-weight="bold" font-size="26" fill="#f00">c</text><text x="0" y="0" transform="translate(874.55,397.21) rotate(435.00)" text-anchor="middle" font-family="Liberation Sans" font-weight="bold" font-size="26" fill="#f00">o</text><text x="0" y="0" transform="translate(878.18,426.95) rotate(451.10) scale(0.72,1)" text-anchor="middle" font-family="Liberation Sans" font-weight="bold" font-size="26" fill="#f00">m</text><text x="0" y="0" transform="translate(710.68,541.65) rotate(27.40) skewX(-12)" text-anchor="middle" font-family="Liberation Sans" font-size="14" fill="#f00">5</text><text x="0" y="0" transform="translate(724.61,547.87) rotate(20.75) skewX(-12)" text-anchor="middle" font-family="Liberation Sans" font-size="14" fill="#f00">1</text><text x="0" y="0" transform="translate(739.16,552.44) rotate(14.10) skewX(-12)" text-anchor="middle" font-family="Liberation Sans" font-size="14" fill="#f00">5</text><text x="0" y="0" transform="translate(754.15,555.29) rotate(7.45) skewX(-12)" text-anchor="middle" font-family="Liberation Sans" font-size="14" fill="#f00">y</text><text x="0" y="0" transform="translate(769.36,556.39) rotate(0.80) skewX(-12)" text-anchor="middle" font-family="Liberation Sans" font-size="14" fill="#f00">m</text><text x="0" y="0" transform="translate(784.60,555.72) rotate(-5.85) skewX(-12)" text-anchor="middle" font-family="Liberation Sans" font-size="14" fill="#f00">.</text><text x="0" y="0" transform="translate(799.66,553.28) rotate(-12.50) skewX(-12)" text-anchor="middle" font-family="Liberation Sans" font-size="14" fill="#f00">c</text><text x="0" y="0" transform="translate(814.34,549.12) rotate(-19.15) skewX(-12)" text-anchor="middle" font-family="Liberation Sans" font-size="14" fill="#f00">o</text><text x="0" y="0" transform="translate(828.43,543.29) rotate(-25.80) skewX(-12)" text-anchor="middle" font-family="Liberation Sans" font-size="14" fill="#f00">m</text><text x="708.8" y="438.5" text-anchor="middle" font-family="Liberation Sans" font-size="38.5" fill="#f00" stroke="#f00" stroke-width="0.9">5</text><text x="731" y="438.5" text-anchor="middle" font-family="Liberation Sans" font-size="38.5" fill="#f00" stroke="#f00" stroke-width="0.9">1</text><text x="751.2" y="438.5" text-anchor="middle" font-family="Liberation Sans" font-size="38.5" fill="#f00" stroke="#f00" stroke-width="0.9">5</text><text x="787" y="438.5" text-anchor="middle" font-family="Liberation Sans" font-size="38" fill="#f00">源</text><text x="826" y="438.5" text-anchor="middle" font-family="Liberation Sans" font-size="38" fill="#f00">码</text><text x="0" y="0" transform="translate(704.5,505.5) scale(1,1.06)" text-anchor="middle" font-family="Liberation Sans" font-weight="bold" font-size="28" fill="#f00">5</text><text x="0" y="0" transform="translate(720.5,505.5) scale(1,1.06)" text-anchor="middle" font-family="Liberation Sans" font-weight="bold" font-size="28" fill="#f00">1</text><text x="0" y="0" transform="translate(738.5,505.5) scale(1,1.06)" text-anchor="middle" font-family="Liberation Sans" font-weight="bold" font-size="28" fill="#f00">5</text><text x="0" y="0" transform="translate(755.8,505.5) scale(0.9,0.94)" text-anchor="middle" font-family="Liberation Sans" font-weight="bold" font-size="28" fill="#f00">y</text><text x="0" y="0" transform="translate(772.6,505.5) scale(0.66,0.94)" text-anchor="middle" font-family="Liberation Sans" font-weight="bold" font-size="28" fill="#f00">m</text><text x="0" y="0" transform="translate(786.2,505.5) scale(1,1)" text-anchor="middle" font-family="Liberation Sans" font-weight="bold" font-size="28" fill="#f00">.</text><text x="0" y="0" transform="translate(806.5,505.5) scale(1,0.94)" text-anchor="middle" font-family="Liberation Sans" font-weight="bold" font-size="28" fill="#f00">c</text><text x="0" y="0" transform="translate(824,505.5) scale(1,0.94)" text-anchor="middle" font-family="Liberation Sans" font-weight="bold" font-size="28" fill="#f00">o</text><text x="0" y="0" transform="translate(840.8,505.5) scale(0.66,0.94)" text-anchor="middle" font-family="Liberation Sans" font-weight="bold" font-size="28" fill="#f00">m</text></svg>
</body></html>
